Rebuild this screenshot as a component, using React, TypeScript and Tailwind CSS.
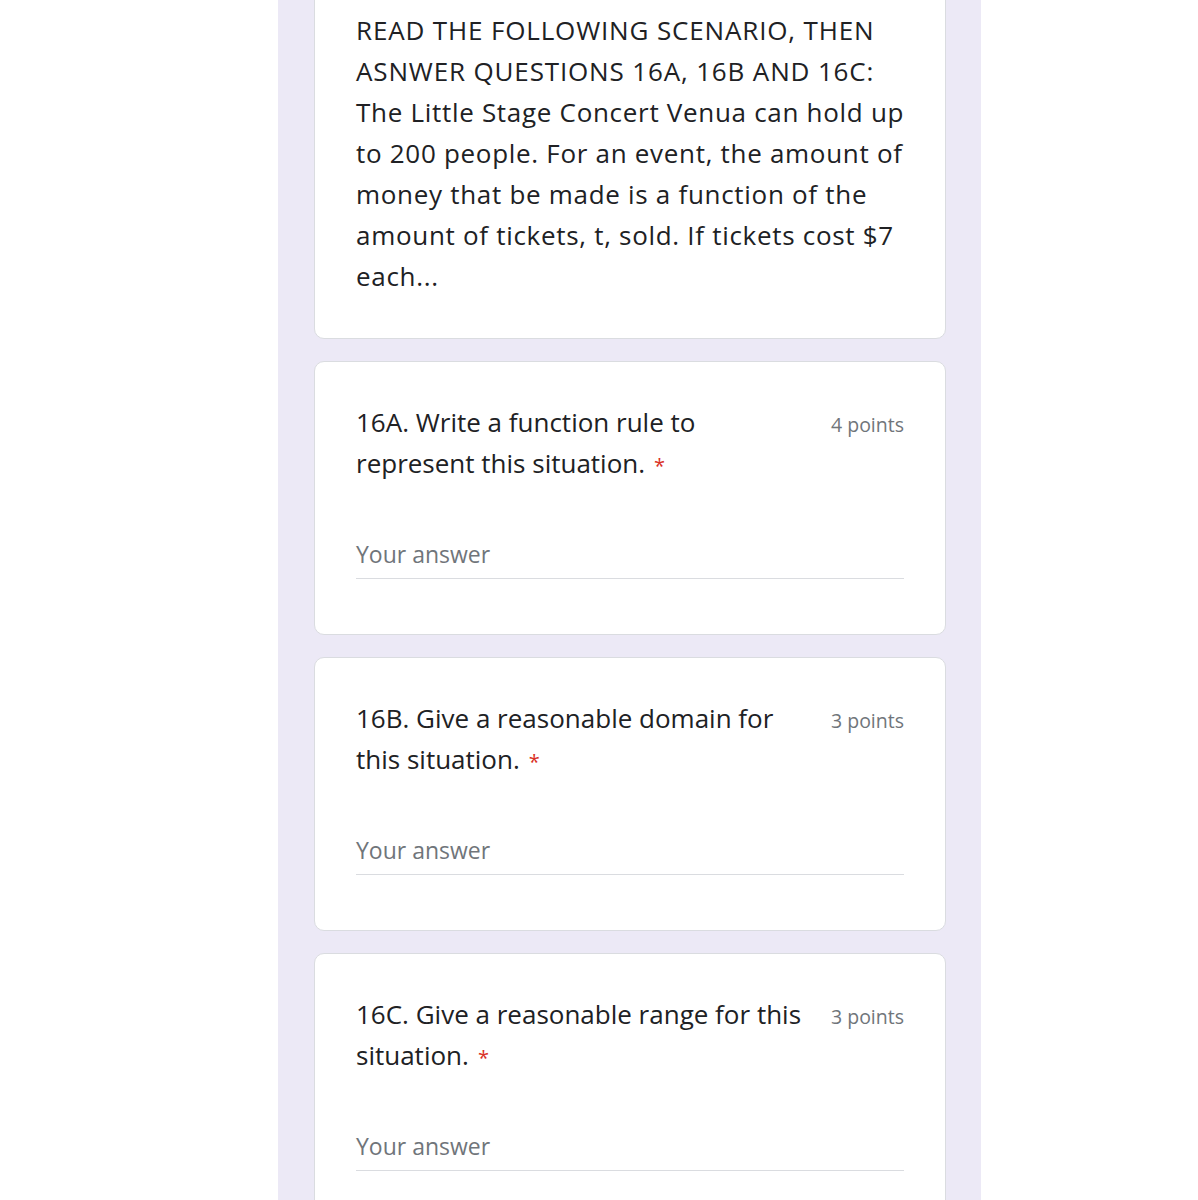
import React from "react";

const intro = [
  "READ THE FOLLOWING SCENARIO, THEN",
  "ASNWER QUESTIONS 16A, 16B AND 16C:",
  "The Little Stage Concert Venua can hold up",
  "to 200 people. For an event, the amount of",
  "money that be made is a function of the",
  "amount of tickets, t, sold. If tickets cost $7",
  "each...",
];

const questions = [
  { lines: ["16A. Write a function rule to", "represent this situation."], points: "4 points" },
  { lines: ["16B. Give a reasonable domain for", "this situation."], points: "3 points" },
  { lines: ["16C. Give a reasonable range for this", "situation."], points: "3 points" },
];

function QuestionCard({ lines, points }: { lines: string[]; points: string }) {
  return (
    <div className="bg-white border border-[#dadce0] rounded-[10px] px-[41px] pt-[40px] pb-[55px]">
      <div className="flex items-start">
        <div className="flex-1 text-[26px] leading-[41px] text-[#202124]">
          {lines.map((l, i) => (
            <div key={i} className="whitespace-nowrap h-[41px]">
              {l}
              {i === lines.length - 1 && (
                <span className="text-[#d93025] text-[20px] leading-none ml-[9px]">*</span>
              )}
            </div>
          ))}
        </div>
        <div className="ml-[12px] pt-[2px] text-[19.5px] leading-[41px] text-[#70757a] whitespace-nowrap">{points}</div>
      </div>
      <div className="mt-[55px] text-[23px] leading-[30px] text-[#70757a] pb-[9px] border-b border-[#dadce0]">
        Your answer
      </div>
    </div>
  );
}

export default function App() {
  return (
    <div className="min-h-[1200px] bg-white overflow-hidden" style={{ fontFamily: '"Open Sans", "Noto Sans", sans-serif' }}>
      <div className="ml-[278px] w-[703px] min-h-[1200px] bg-[#ece9f6] pl-[36px] pr-[35px] flex flex-col gap-[22px]">
        <div className="-mt-[31px] bg-white border border-[#dadce0] rounded-[10px] px-[41px] pt-[40px] pb-[41px]">
          <div className="text-[26px] leading-[41px] font-medium text-[#202124]">
            {intro.map((l, i) => (
              <div key={i} className={i < 2 ? "whitespace-nowrap tracking-[0.85px]" : "whitespace-nowrap tracking-[0.7px]"}>
                {l}
              </div>
            ))}
          </div>
        </div>
        {questions.map((q) => (
          <QuestionCard key={q.points + q.lines[0]} lines={q.lines} points={q.points} />
        ))}
      </div>
    </div>
  );
}
